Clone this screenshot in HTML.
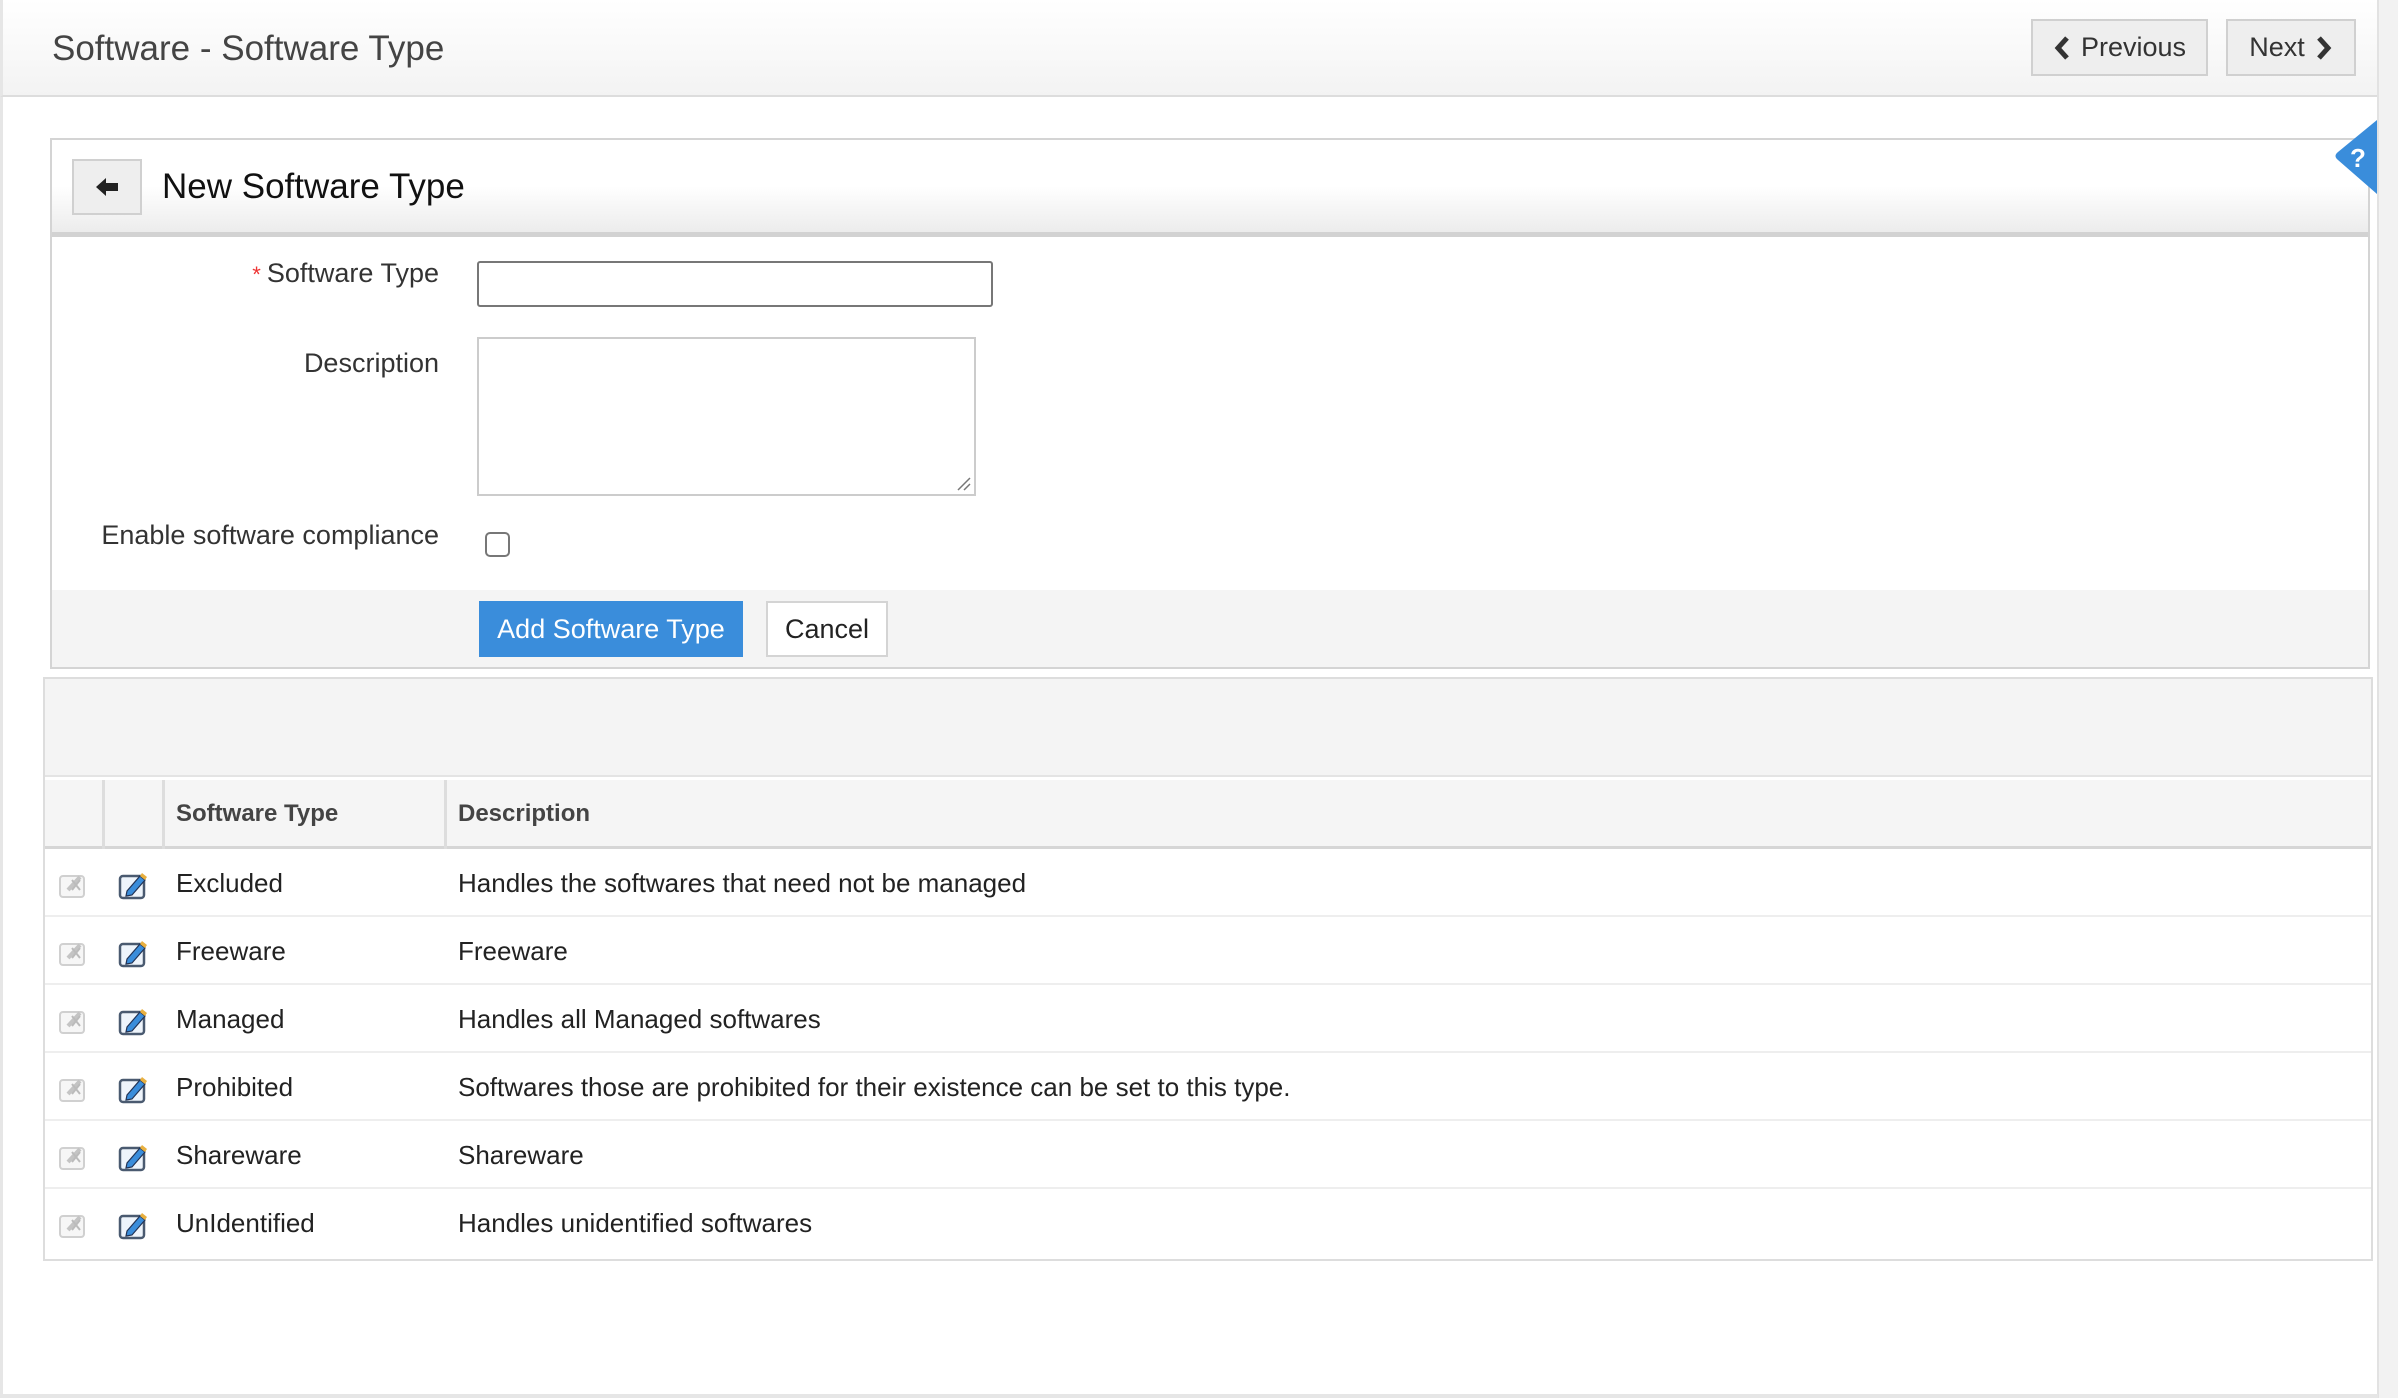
<!DOCTYPE html>
<html><head><meta charset="utf-8"><style>
*{box-sizing:border-box;margin:0;padding:0}
body{width:2398px;height:1398px;background:#fff;font-family:"Liberation Sans",Arial,sans-serif;color:#222;position:relative;overflow:hidden}
.abs{position:absolute}
#hdr{left:0;top:0;width:2378px;height:97px;background:linear-gradient(#fff,#f3f3f3);border-bottom:2px solid #ddd;border-left:3px solid #e6e6e6}
#title{left:52px;top:29px;font-size:35px;color:#444}
.btn{background:#eee;border:2px solid #d0d0d0;font-size:27px;color:#333;display:flex;align-items:center;justify-content:center;gap:10px}
#rside{left:2377px;top:0;width:21px;height:1398px;background:#f2f2f2;border-left:2px solid #e2e2e2}
#lside{left:0;top:97px;width:3px;height:1300px;background:#e6e6e6}
#bot{left:0;top:1394px;width:2378px;height:4px;background:#e6e6e6}
#panel{left:50px;top:138px;width:2320px;height:531px;border:2px solid #d4d4d4}
#ph{left:52px;top:140px;width:2316px;height:97px;background:linear-gradient(#fff 50%,#ececec);border-bottom:5px solid #d2d2d2}
.lbl{font-size:27px;color:#333;text-align:right;width:400px;left:39px}
</style></head><body>
<div id="hdr" class="abs"></div>
<div id="title" class="abs">Software - Software Type</div>
<div class="abs btn" style="left:2031px;top:19px;width:177px;height:57px"><svg width="18" height="26" viewBox="0 0 18 26"><path d="M14 3 L5 13 L14 23" stroke="#333" stroke-width="5" fill="none"/></svg>Previous</div>
<div class="abs btn" style="left:2226px;top:19px;width:130px;height:57px">Next<svg width="18" height="26" viewBox="0 0 18 26"><path d="M4 3 L13 13 L4 23" stroke="#333" stroke-width="5" fill="none"/></svg></div>
<div id="rside" class="abs"></div><div id="lside" class="abs"></div><div id="bot" class="abs"></div>

<div id="panel" class="abs"></div>
<div id="ph" class="abs"></div>
<div class="abs" style="left:72px;top:159px;width:70px;height:56px;background:#eee;border:2px solid #d0d0d0;display:flex;align-items:center;justify-content:center"><svg width="26" height="22" viewBox="0 0 26 22"><path d="M2 11 L12 2 L12 7 L24 7 L24 15 L12 15 L12 20 Z" fill="#222"/></svg></div>
<div class="abs" style="left:162px;top:167px;font-size:35px;color:#111">New Software Type</div>
<svg class="abs" style="left:2333px;top:120px" width="46" height="76" viewBox="0 0 46 76"><path d="M44 0 L44 74 L5 40 Q0 36 5 32 Z" fill="#3a8ddb"/><text x="17" y="47" font-size="26" font-weight="bold" fill="#fff" font-family="Liberation Sans,sans-serif">?</text></svg>

<div class="abs lbl" style="top:258px"><span style="color:#e33;font-size:22px">* </span>Software Type</div>
<div class="abs" style="left:477px;top:261px;width:516px;height:46px;border:2px solid #777;border-radius:3px"></div>
<div class="abs lbl" style="top:348px">Description</div>
<div class="abs" style="left:477px;top:337px;width:499px;height:159px;border:2px solid #ccc"></div>
<svg class="abs" style="left:956px;top:476px" width="16" height="16"><path d="M2 14L14 2M8 14L14 8" stroke="#777" stroke-width="1.5"/></svg>
<div class="abs lbl" style="top:520px">Enable software compliance</div>
<div class="abs" style="left:485px;top:532px;width:25px;height:25px;border:2px solid #777;border-radius:5px"></div>
<div class="abs" style="left:52px;top:590px;width:2316px;height:77px;background:#f4f4f4"></div>
<div class="abs" style="left:479px;top:601px;width:264px;height:56px;background:#3a8ddb;color:#fff;font-size:27px;display:flex;align-items:center;justify-content:center">Add Software Type</div>
<div class="abs" style="left:766px;top:601px;width:122px;height:56px;background:#fff;border:2px solid #d4d4d4;color:#222;font-size:27px;display:flex;align-items:center;justify-content:center">Cancel</div>

<div class="abs" style="left:43px;top:677px;width:2330px;height:584px;border:2px solid #ddd"></div>
<div class="abs" style="left:45px;top:679px;width:2326px;height:98px;background:#f4f4f4;border-bottom:2px solid #e4e4e4"></div>
<div class="abs" style="left:45px;top:780px;width:2326px;height:69px;background:#f5f5f5;border-bottom:3px solid #d6d6d6"></div>
<div class="abs" style="left:102px;top:780px;width:3px;height:69px;background:#ddd"></div>
<div class="abs" style="left:162px;top:780px;width:3px;height:69px;background:#ddd"></div>
<div class="abs" style="left:444px;top:780px;width:3px;height:69px;background:#ddd"></div>
<div class="abs" style="left:176px;top:800px;font-size:24px;font-weight:bold;color:#444">Software Type</div>
<div class="abs" style="left:458px;top:800px;font-size:24px;font-weight:bold;color:#444">Description</div>

<div class="abs" style="left:45px;top:849px;width:2326px">
<style>.r{height:68px;border-bottom:2px solid #eee;position:relative;font-size:26px}.r span{position:absolute;top:19px}</style>
<div class="r"><span style="left:131px">Excluded</span><span style="left:413px">Handles the softwares that need not be managed</span></div>
<div class="r"><span style="left:131px">Freeware</span><span style="left:413px">Freeware</span></div>
<div class="r"><span style="left:131px">Managed</span><span style="left:413px">Handles all Managed softwares</span></div>
<div class="r"><span style="left:131px">Prohibited</span><span style="left:413px">Softwares those are prohibited for their existence can be set to this type.</span></div>
<div class="r"><span style="left:131px">Shareware</span><span style="left:413px">Shareware</span></div>
<div class="r" style="border:none"><span style="left:131px">UnIdentified</span><span style="left:413px">Handles unidentified softwares</span></div>
</div>
<svg class="abs" style="left:58px;top:870px" width="90" height="380">
<defs>
<g id="d"><rect x="2" y="6" width="24" height="21" rx="3" fill="#f6f6f6" stroke="#d0d0d0" stroke-width="2"/><path d="M10 20 L22 7" stroke="#c4c4c4" stroke-width="4"/><path d="M14 10 L22 20 M22 10 L14 20" stroke="#bbb" stroke-width="2"/></g>
<g id="e"><rect x="2" y="6" width="24" height="22" rx="3" fill="#eef4fb" stroke="#4a5a70" stroke-width="2.5"/><path d="M9 21 L22 6 L27 10 L14 25 L8 26 Z" fill="#3a8ddb" stroke="#235" stroke-width="1.2"/><path d="M22 6 L24 3 L29 7 L27 10 Z" fill="#e8b040"/></g>
</defs>
<use href="#d" y="0"/><use href="#e" x="60" y="0"/>
<use href="#d" y="68"/><use href="#e" x="60" y="68"/>
<use href="#d" y="136"/><use href="#e" x="60" y="136"/>
<use href="#d" y="204"/><use href="#e" x="60" y="204"/>
<use href="#d" y="272"/><use href="#e" x="60" y="272"/>
<use href="#d" y="340"/><use href="#e" x="60" y="340"/>
</svg>
</body></html>
